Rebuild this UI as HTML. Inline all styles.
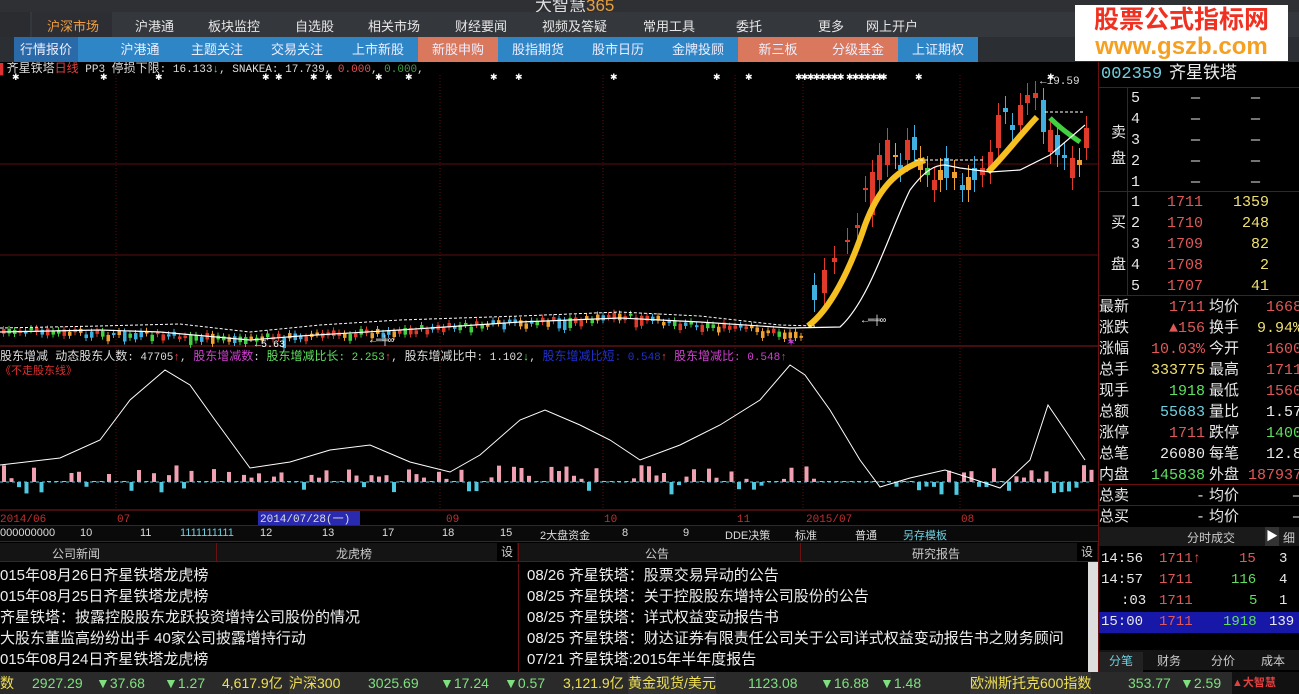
<!DOCTYPE html>
<html><head><meta charset="utf-8">
<style>
*{margin:0;padding:0;box-sizing:border-box}
body{width:1299px;height:694px;overflow:hidden;background:#000;font-family:"Liberation Sans","Noto Sans CJK SC",sans-serif;position:relative;color:#ddd}
.abs{position:absolute}
#top{left:0;top:0;width:1299px;height:12px;background:#2e3034;overflow:hidden}
#nav{left:0;top:12px;width:1299px;height:25px;background:#34373c;font-size:13px}
#nav span{position:absolute;top:4px;color:#e6e6e6}
#blue{left:0;top:37px;width:1299px;height:25px;background:#2b2e33;font-size:13px}
#blue div{position:absolute;top:0;height:25px;line-height:25px;text-align:center;color:#eef;background:#2f86c6}
#blue div.o{background:#d9785d}
#wm{left:1075px;top:5px;width:213px;height:56px;background:#fff;text-align:center}
.rp{font-family:"Liberation Mono","Noto Sans CJK SC",monospace}
#right{left:1098px;top:62px;width:201px;height:465px;background:#000;border-left:1px solid #6a1010}
.row{position:absolute;left:0;width:201px;height:21px;font-size:15px;line-height:21px}
.row b{position:absolute;font-weight:normal}
.r{color:#e05858}.g{color:#5fe05f}.w{color:#e8e8e8}.y{color:#f0e070}.c{color:#6fd0e0}
.tabs{left:0;top:525px;width:1098px;height:17px;background:#0a0a0a;border-top:1px solid #6a1010;border-bottom:1px solid #6a1010;font-size:11px}
.tabs span{position:absolute;top:1px;color:#ddd}
#news{left:0;top:562px;width:1098px;height:110px;font-size:15px;color:#eee}
#news div{position:absolute;white-space:nowrap}
#status{left:0;top:672px;width:1299px;height:22px;background:#2a2a2a;font-size:14px;line-height:22px;white-space:nowrap}
#status span{position:absolute}
</style></head><body>
<div id="top" class="abs"><span style="position:absolute;left:535px;top:-9px;font-size:17px;color:#ddd">大智慧<span style="color:#e8a040">365</span></span></div>
<div id="nav" class="abs">
<div style="position:absolute;left:0;top:0;width:30px;height:25px;background:#2a2c30"></div>
<div style="position:absolute;left:32px;top:0;width:80px;height:25px;background:#2c2e33"></div>
<span style="left:47px;color:#f0a040">沪深市场</span><span style="left:135px">沪港通</span><span style="left:208px">板块监控</span><span style="left:295px">自选股</span><span style="left:368px">相关市场</span><span style="left:455px">财经要闻</span><span style="left:542px">视频及答疑</span><span style="left:643px">常用工具</span><span style="left:736px">委托</span><span style="left:818px">更多</span><span style="left:866px">网上开户</span>
</div>
<div id="blue" class="abs">
<div style="left:14px;width:86px;background:#2f86c6"></div>
<div style="left:14px;width:64px;background:#2a6aa8">行情报价</div>
<div style="left:100px;width:80px">沪港通</div>
<div style="left:178px;width:78px">主题关注</div>
<div style="left:256px;width:82px">交易关注</div>
<div style="left:338px;width:80px">上市新股</div>
<div class="o" style="left:418px;width:80px">新股申购</div>
<div style="left:498px;width:80px">股指期货</div>
<div style="left:578px;width:80px">股市日历</div>
<div style="left:658px;width:80px">金牌投顾</div>
<div class="o" style="left:738px;width:80px">新三板</div>
<div class="o" style="left:818px;width:80px">分级基金</div>
<div style="left:898px;width:80px">上证期权</div>
</div>
<div id="wm" class="abs"><div style="font-size:25px;font-weight:bold;color:#f03020;line-height:28px;margin-top:1px">股票公式指标网</div><div style="font-size:24px;font-weight:bold;color:#f5a020;line-height:26px">www.gszb.com</div></div>

<svg class="abs" style="left:0;top:62px" width="1098" height="463" viewBox="0 62 1098 463" id="chart">
<g stroke="#5a0e0e" stroke-width="1">
<line x1="0" y1="164" x2="1098" y2="164"/><line x1="0" y1="255" x2="1098" y2="255"/>
<line x1="0" y1="346" x2="1098" y2="346" stroke="#8a1a1a"/><line x1="0" y1="510" x2="1098" y2="510" stroke="#8a1a1a"/>
<g stroke-dasharray="1,2"><line x1="116" y1="75" x2="116" y2="510"/><line x1="440" y1="75" x2="440" y2="510"/><line x1="603" y1="75" x2="603" y2="510"/><line x1="735" y1="75" x2="735" y2="510"/><line x1="803" y1="75" x2="803" y2="510"/><line x1="960" y1="75" x2="960" y2="510"/></g>
</g>
<g id="cand"></g>
<path d="M808,326 C830,310 850,270 865,225 C878,190 895,170 925,160" stroke="#f5c020" stroke-width="6" fill="none"/>
<path d="M988,172 C1005,155 1020,135 1037,117" stroke="#f5c020" stroke-width="6" fill="none"/>
<path d="M1050,118 C1060,128 1070,135 1080,142" stroke="#40d040" stroke-width="5" fill="none"/>
<path d="M0,332 L100,330 L160,332 L250,340 L300,336 L400,330 L520,322 L620,318 L700,322 L790,328 L840,327 C870,300 890,230 910,190 C925,170 935,165 945,165 L960,168 L990,172 L1020,170 L1050,155 L1085,125" stroke="#fff" stroke-width="1.2" fill="none"/>
<path d="M0,328 L100,326 L180,324 L250,332 L320,325 L400,320 L520,316 L620,312 L700,316 L780,325 L815,326" stroke="#fff" stroke-width="1" stroke-dasharray="3,2" fill="none"/>
<g stroke="#fff" stroke-dasharray="3,2"><line x1="915" y1="160" x2="985" y2="160"/><line x1="1045" y1="112" x2="1085" y2="112"/></g>
<text x="1040" y="84" fill="#ddd" font-size="11" font-family="Liberation Mono">←19.59</text>
<text x="862" y="323" fill="#fff" font-size="10" font-family="Liberation Mono">←═╪∞</text>
<text x="370" y="343" fill="#fff" font-size="10" font-family="Liberation Mono">←═╪∞</text>
<text x="255" y="347" fill="#fff" font-size="10" font-family="Liberation Mono">←5.63</text>
<text x="786" y="346" fill="#c040e0" font-size="12">✶</text>
<g id="stars" fill="#fff" font-size="9"></g>
<text x="0" y="72" font-size="11" font-family="Liberation Mono,Noto Sans CJK SC" fill="#ddd"><tspan fill="#e03030">▌</tspan><tspan font-size="12">齐星铁塔</tspan><tspan fill="#e04040" font-size="12">日线</tspan> PP3 <tspan font-size="12">停损下限</tspan>: 16.133<tspan fill="#5fe05f">↓</tspan>, SNAKEA: 17.739, <tspan fill="#e05050">0.000</tspan>, <tspan fill="#40a040">0.000</tspan>,</text>
<text x="0" y="360" font-size="11" font-family="Liberation Mono,Noto Sans CJK SC" fill="#ddd"><tspan font-size="12">股东增减 动态股东人数</tspan>: 47705<tspan fill="#e04040">↑</tspan>, <tspan fill="#d040d0" font-size="12">股东增减数</tspan>: <tspan fill="#5fe05f"><tspan font-size="12">股东增减比长</tspan>: 2.253</tspan><tspan fill="#e04040">↑</tspan>, <tspan font-size="12">股东增减比中</tspan>: 1.102<tspan fill="#5fe05f">↓</tspan>, <tspan fill="#2030d0"><tspan font-size="12">股东增减比短</tspan>: 0.548</tspan><tspan fill="#e04040">↑</tspan> <tspan fill="#d040d0"><tspan font-size="12">股东增减比</tspan>: 0.548</tspan><tspan fill="#e04040">↑</tspan></text>
<text x="0" y="374" font-size="11" fill="#e03030">《不走股东线》</text>
<g id="bars"></g>
<polyline fill="none" stroke="#fff" stroke-width="1" points="0,465 60,458 100,440 130,400 165,370 190,385 215,420 250,468 290,462 330,450 370,445 410,462 450,472 480,455 520,420 545,410 580,425 610,440 640,460 680,445 720,425 760,400 790,365 805,375 830,410 860,460 880,487 910,478 945,470 970,478 1000,488 1030,460 1048,405 1065,430 1085,460"/>
<g font-size="11" font-family="Liberation Mono" fill="#c03030">
<text x="0" y="522">2014/06</text><text x="117" y="522">07</text><text x="446" y="522">09</text><text x="604" y="522">10</text><text x="737" y="522">11</text><text x="806" y="522">2015/07</text><text x="961" y="522">08</text></g>
<rect x="258" y="511" width="102" height="14" fill="#2a2ab0"/><text x="260" y="522" font-size="11" fill="#ddd" font-family="Liberation Mono,Noto Sans CJK SC">2014/07/28(一)</text>
</svg>

<div id="right" class="abs rp">
<div class="row" style="top:2px;height:22px;font-size:17px;font-weight:bold"><b class="c" style="left:2px">002359</b><b style="left:70px;color:#eee">齐星铁塔</b></div>
<div style="position:absolute;left:0;top:25px;width:201px;border-top:1px solid #6a1010"></div>
<div style="position:absolute;left:28px;top:25px;height:208px;border-left:1px solid #6a1010"></div>
<div style="position:absolute;left:0;top:129px;width:201px;border-top:1px solid #6a1010"></div>
<div style="position:absolute;left:0;top:233px;width:201px;border-top:1px solid #6a1010"></div>
<div id="ob"></div>
<div style="position:absolute;left:0;top:422px;width:201px;border-top:1px solid #6a1010"></div>
<div style="position:absolute;left:0;top:443px;width:201px;border-top:1px solid #6a1010"></div>
</div>

<div class="abs tabs" style="width:1098px"><span style="left:0">000000000</span><span style="left:80px">10</span><span style="left:140px">11</span><span style="left:180px;color:#6fd0e0">1111111111</span><span style="left:260px">12</span><span style="left:322px">13</span><span style="left:382px">17</span><span style="left:442px">18</span><span style="left:500px">15</span><span style="left:540px">2大盘资金</span><span style="left:622px">8</span><span style="left:683px">9</span><span style="left:725px">DDE决策</span><span style="left:795px">标准</span><span style="left:855px">普通</span><span style="left:903px;color:#6fd0e0">另存模板</span></div>
<div class="abs" style="left:0;top:543px;width:1098px;height:19px;background:#141414;font-size:12px;color:#ccc;border-bottom:1px solid #6a1010">
<span style="position:absolute;left:52px;top:2px">公司新闻</span><span style="position:absolute;left:336px;top:2px">龙虎榜</span><span style="position:absolute;left:497px;top:0;width:20px;height:18px;background:#000;text-align:center">设</span>
<span style="position:absolute;left:645px;top:2px">公告</span><span style="position:absolute;left:912px;top:2px">研究报告</span><span style="position:absolute;left:1077px;top:0;width:20px;height:18px;background:#000;text-align:center">设</span>
<div style="position:absolute;left:216px;top:0;height:19px;border-left:1px solid #6a1010"></div><div style="position:absolute;left:518px;top:0;height:19px;border-left:1px solid #6a1010"></div><div style="position:absolute;left:800px;top:0;height:19px;border-left:1px solid #6a1010"></div></div>
<div id="news" class="abs">
<div style="left:0;top:2px">015年08月26日齐星铁塔龙虎榜</div><div style="left:0;top:23px">015年08月25日齐星铁塔龙虎榜</div><div style="left:0;top:44px">齐星铁塔：披露控股股东龙跃投资增持公司股份的情况</div><div style="left:0;top:65px">大股东董监高纷纷出手 40家公司披露增持行动</div><div style="left:0;top:86px">015年08月24日齐星铁塔龙虎榜</div>
<div style="left:518px;width:570px;overflow:hidden;top:2px;border-left:1px solid #6a1010;padding-left:8px;height:110px">
<p style="height:21px">08/26 齐星铁塔：股票交易异动的公告</p><p style="height:21px">08/25 齐星铁塔：关于控股股东增持公司股份的公告</p><p style="height:21px">08/25 齐星铁塔：详式权益变动报告书</p><p style="height:21px">08/25 齐星铁塔：财达证券有限责任公司关于公司详式权益变动报告书之财务顾问</p><p>07/21 齐星铁塔:2015年半年度报告</p></div>
<div style="left:1088px;top:0;width:10px;height:110px;background:#ddd"></div>
</div>

<div class="abs" style="left:1098px;top:527px;width:201px;height:145px;background:#000;font-size:12px;border-left:1px solid #6a1010">
<div style="position:absolute;left:0;top:0;width:201px;height:19px;background:#1a1a1a;color:#ccc"><span style="position:absolute;left:88px;top:2px">分时成交</span><span style="position:absolute;left:166px;top:0;width:14px;height:19px;background:#333;color:#fff;text-align:center">▶</span><span style="position:absolute;left:184px;top:2px">细</span></div>
<div class="rp" style="position:absolute;top:22px;left:0;width:201px;font-size:14px;line-height:21px">
<div style="position:relative;height:21px"><b class="w" style="position:absolute;left:2px;font-weight:normal">14:56</b><b class="r" style="position:absolute;left:60px;font-weight:normal">1711↑</b><b class="r" style="position:absolute;left:140px;font-weight:normal">15</b><b class="w" style="position:absolute;left:180px;font-weight:normal">3</b></div>
<div style="position:relative;height:21px"><b class="w" style="position:absolute;left:2px;font-weight:normal">14:57</b><b class="r" style="position:absolute;left:60px;font-weight:normal">1711</b><b class="g" style="position:absolute;left:132px;font-weight:normal">116</b><b class="w" style="position:absolute;left:180px;font-weight:normal">4</b></div>
<div style="position:relative;height:21px"><b class="w" style="position:absolute;left:22px;font-weight:normal">:03</b><b class="r" style="position:absolute;left:60px;font-weight:normal">1711</b><b class="g" style="position:absolute;left:150px;font-weight:normal">5</b><b class="w" style="position:absolute;left:180px;font-weight:normal">1</b></div>
<div style="position:relative;height:21px;background:#1818a8"><b class="w" style="position:absolute;left:2px;font-weight:normal">15:00</b><b class="r" style="position:absolute;left:60px;font-weight:normal">1711</b><b class="g" style="position:absolute;left:124px;font-weight:normal">1918</b><b class="w" style="position:absolute;left:170px;font-weight:normal">139</b></div></div>
<div style="position:absolute;left:0;top:123px;width:201px;height:20px;background:#141414;color:#ccc"><span style="position:absolute;left:0;width:44px;height:20px;text-align:center;background:#222;color:#6fd0e0;top:2px">分笔</span><span style="position:absolute;left:58px;top:2px">财务</span><span style="position:absolute;left:112px;top:2px">分价</span><span style="position:absolute;left:162px;top:2px">成本</span></div>
</div>

<div id="status" class="abs">
<span style="left:0;color:#f0e050">数</span><span style="left:32px;color:#7fe07f">2927.29</span><span style="left:96px;color:#7fe07f">▼37.68</span><span style="left:164px;color:#7fe07f">▼1.27</span><span style="left:222px;color:#f0e050">4,617.9亿</span><span style="left:289px;color:#f0e050;background:#333">沪深300</span>
<span style="left:368px;color:#7fe07f">3025.69</span><span style="left:440px;color:#7fe07f">▼17.24</span><span style="left:504px;color:#7fe07f">▼0.57</span><span style="left:563px;color:#f0e050">3,121.9亿</span><span style="left:628px;color:#f0e050;background:#333">黄金现货/美元</span>
<span style="left:748px;color:#7fe07f">1123.08</span><span style="left:820px;color:#7fe07f">▼16.88</span><span style="left:880px;color:#7fe07f">▼1.48</span><span style="left:970px;color:#f0e050;background:#333">欧洲斯托克600指数</span><span style="left:1128px;color:#7fe07f">353.77</span><span style="left:1180px;color:#7fe07f">▼2.59</span>
<span style="left:1232px;top:0;width:67px;height:22px;background:#111;color:#e04040;font-size:11px;font-weight:bold">▲大智慧</span></div>

<script>
var ns="http://www.w3.org/2000/svg";
function el(p,t,a){var e=document.createElementNS(ns,t);for(var k in a)e.setAttribute(k,a[k]);p.appendChild(e);return e;}
var s=7;function rnd(){s=(s*9301+49297)%233280;return s/233280;}
var cg=document.getElementById('cand');
function base(x){
 if(x<250)return 330+8*x/250; if(x<400)return 338-8*(x-250)/150; if(x<620)return 330-14*(x-400)/220; if(x<800)return 316+18*(x-620)/180; return 330;}
var cols=["#e03a2a","#40b0e0","#f0a030","#40d040"];
for(var x=2;x<805;x+=5.5){var y=base(x)-4+rnd()*6,h=2+rnd()*5;if(rnd()<0.06)h=10;var c=cols[Math.floor(rnd()*4)];
 el(cg,'line',{x1:x+1.5,y1:y-3,x2:x+1.5,y2:y+h+3,stroke:c,'stroke-width':1});el(cg,'rect',{x:x,y:y,width:3.5,height:h,fill:c});}
var big=[[812,285,300,"#40b0e0"],[822,270,293,"#e03a2a"],[832,258,262,"#e03a2a"],[845,240,242,"#e03a2a"],[855,225,228,"#e03a2a"],[863,188,190,"#e03a2a"],[870,172,215,"#e03a2a"],[877,155,180,"#e03a2a"],[885,140,165,"#e03a2a"],[893,155,157,"#f0a030"],[898,165,170,"#40b0e0"],[905,140,160,"#e03a2a"],[912,137,150,"#40b0e0"],[918,158,170,"#f0a030"],[925,168,175,"#40d040"],[932,180,190,"#e03a2a"],[938,170,180,"#f0a030"],[944,158,178,"#40b0e0"],[952,172,178,"#f0a030"],[960,185,190,"#40b0e0"],[966,177,190,"#f0a030"],[972,168,180,"#40b0e0"],[980,168,175,"#e03a2a"],[988,152,172,"#e03a2a"],[996,115,148,"#e03a2a"],[1003,108,112,"#40b0e0"],[1010,125,130,"#40b0e0"],[1018,105,125,"#e03a2a"],[1025,95,103,"#e03a2a"],[1033,93,98,"#e03a2a"],[1041,100,132,"#40b0e0"],[1048,130,152,"#e03a2a"],[1055,135,155,"#40b0e0"],[1062,155,158,"#40b0e0"],[1070,158,178,"#e03a2a"],[1077,160,165,"#f0a030"],[1084,128,148,"#e03a2a"]];
big.forEach(function(b){el(cg,'line',{x1:b[0]+2.5,y1:b[1]-12,x2:b[0]+2.5,y2:b[2]+12,stroke:b[3]});el(cg,'rect',{x:b[0],y:b[1],width:5,height:b[2]-b[1],fill:b[3]});});
var st=document.getElementById('stars');
[12,100,155,262,275,310,325,375,405,490,515,610,713,745,795,801,807,813,819,825,831,837,846,852,858,864,870,876,880,915,1047].forEach(function(x){el(st,'text',{x:x,y:80}).textContent='✱';});
var bg=document.getElementById('bars');
for(var x=2;x<1090;x+=7.5){var h=3+rnd()*14; if(rnd()<0.3)h=1;
 if(x>820&&x<910)h=1;
 var c=(rnd()<0.12||(x>900&&rnd()<0.4))?"#50c8e0":"#f0a0b0";
 if(c=="#50c8e0")el(bg,'rect',{x:x,y:482,width:4,height:3+rnd()*10,fill:c});else el(bg,'rect',{x:x,y:482-h,width:4,height:h,fill:c});}
el(bg,'line',{x1:0,y1:482,x2:1090,y2:482,stroke:'#50c8e0','stroke-dasharray':'3,3'});
var ob=document.getElementById('ob');
function row(top,cells){var d=document.createElement('div');d.className='row';d.style.top=top+'px';cells.forEach(function(c){var b=document.createElement('b');b.className=c[2];b.style.left=c[0]+'px';b.textContent=c[1];d.appendChild(b);});ob.appendChild(d);}
for(var i=0;i<5;i++)row(26+i*21,[[32,String(5-i),'w'],[92,'—','w'],[152,'—','w']]);
var bp=[["1711","1359"],["1710","248"],["1709","82"],["1708","2"],["1707","41"]];
for(var i=0;i<5;i++)row(130+i*21,[[32,String(i+1),'w'],[68,bp[i][0],'r'],[160-bp[i][1].length*9+10,bp[i][1],'y']]);
row(61,[[12,'卖','w']]);row(87,[[12,'盘','w']]);row(151,[[12,'买','w']]);row(193,[[12,'盘','w']]);
var st2=[["最新","1711","r","均价","1668","r"],["涨跌","▲156","r","换手","9.94%","y"],["涨幅","10.03%","r","今开","1600","r"],["总手","333775","y","最高","1711","r"],["现手","1918","g","最低","1560","r"],["总额","55683","c","量比","1.57","w"],["涨停","1711","r","跌停","1400","g"],["总笔","26080","w","每笔","12.8","w"],["内盘","145838","g","外盘","187937","r"],["总卖","-","w","均价","—","w"],["总买","-","w","均价","—","w"]];
for(var i=0;i<11;i++){var r=st2[i];row(235+i*21,[[0,r[0],'w'],[106-r[1].length*9,r[1],r[2]],[110,r[3],'w'],[203-r[4].length*9,r[4],r[5]]]);}
</script>
</body></html>
